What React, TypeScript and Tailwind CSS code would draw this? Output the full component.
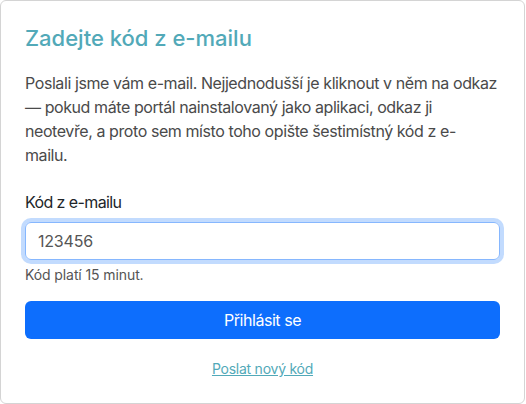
const App = () => {
  return (
    <div className="bg-white font-['Inter',sans-serif]">
      <div className="w-[525px] rounded-md border border-[#d4d4d4] bg-white px-6 pt-6 pb-6">
        <h4 className="mb-[19px] text-[22px] leading-[27px] font-medium text-[#52a9b8]">
          Zadejte kód z e-mailu
        </h4>
        <p className="mb-[23px] text-base leading-6 tracking-[-0.42px] text-[#4a4a4a]">
          Poslali jsme vám e-mail. Nejjednodušší je kliknout v něm na odkaz —
          pokud máte portál nainstalovaný jako aplikaci, odkaz ji neotevře, a
          proto sem místo toho opište šestimístný kód z e-
          <br />
          mailu.
        </p>
        <label className="mb-2 block text-base leading-6 tracking-[-0.6px] text-[#212529]">
          Kód z e-mailu
        </label>
        <input
          type="text"
          defaultValue="123456"
          className="block h-[38px] w-full rounded-md border border-[#86b7fe] px-3 text-base tracking-[-0.2px] text-[#555] shadow-[0_0_0_4px_rgba(13,110,253,0.25)] outline-none"
        />
        <div className="mt-1 text-sm leading-[21px] tracking-[-0.1px] text-[#555]">
          Kód platí 15 minut.
        </div>
        <button className="mt-4 h-[38px] w-full rounded-md bg-[#0d6efd] text-base tracking-[-0.45px] text-white">
          Přihlásit se
        </button>
        <div className="mt-[19px] text-center text-sm leading-[21px] tracking-[-0.25px]">
          <a href="#" className="text-[#52a9b8] underline">
            Poslat nový kód
          </a>
        </div>
      </div>
    </div>
  );
};

export default App;
